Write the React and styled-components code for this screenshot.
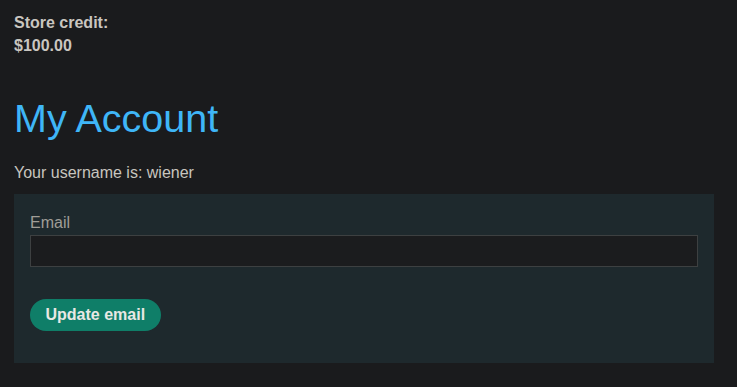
import styled, { createGlobalStyle } from 'styled-components'

const GlobalStyle = createGlobalStyle`
	html, body {
		margin: 0;
		padding: 0;
		background: #1a1b1d;
	}
	body {
		font-family: 'Liberation Sans', Arial, sans-serif;
		color: #c8c5bf;
	}
`

const Page = styled.div`
	padding: 10.5px 23px 24px 14px;
`

const Credit = styled.div`
	font-weight: 700;
	font-size: 16px;
	line-height: 23px;
	color: #c9c6c0;
`

const Heading = styled.h1`
	margin: 37px 0 19px;
	font-weight: 400;
	font-size: 39.5px;
	line-height: 48px;
	color: #3fb6f7;
`

const Text = styled.p`
	margin: 0 0 10.5px;
	font-size: 16px;
	line-height: 23px;
	color: #c8c5bf;
`

const Panel = styled.form`
	display: flex;
	flex-direction: column;
	align-items: flex-start;
	background: #1e292d;
	padding: 16.5px 16px 32px;
`

const Label = styled.label`
	font-size: 16px;
	line-height: 23px;
	color: #a09d97;
	margin-bottom: 1.5px;
`

const Input = styled.input`
	box-sizing: border-box;
	width: 100%;
	height: 32px;
	margin: 0 0 32px;
	background: #1b1c1e;
	border: 1px solid #3d4041;
	color: #c8c5bf;
	font: inherit;
	outline: none;
`

const Button = styled.button`
	height: 32px;
	padding: 0 15.5px;
	border: none;
	border-radius: 16px;
	background: #0f7e68;
	color: #e8e8e4;
	font-family: 'Liberation Sans', Arial, sans-serif;
	font-weight: 700;
	font-size: 16px;
	cursor: pointer;
`

export default function App() {
	return (
		<>
			<GlobalStyle />
			<Page>
				<Credit>
					Store credit:
					<br />
					$100.00
				</Credit>
				<Heading>My Account</Heading>
				<Text>Your username is: wiener</Text>
				<Panel onSubmit={(e) => e.preventDefault()}>
					<Label htmlFor='email'>Email</Label>
					<Input id='email' type='email' />
					<Button type='submit'>Update email</Button>
				</Panel>
			</Page>
		</>
	)
}
